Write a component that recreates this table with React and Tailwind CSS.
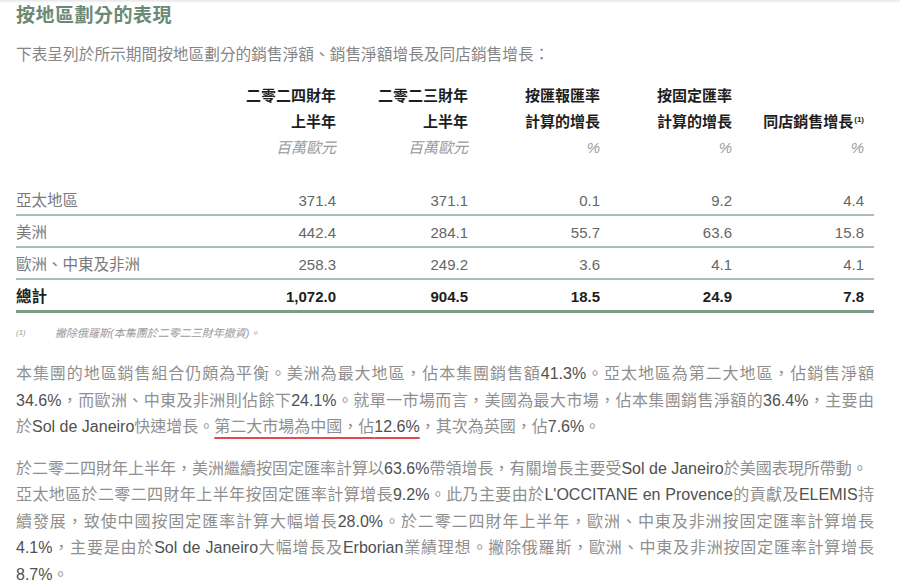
import React from 'react';

const cjk = { fontFamily: '"Liberation Sans", "Noto Sans CJK TC", sans-serif' };

const headers = [
  ['二零二四財年', '上半年', '百萬歐元'],
  ['二零二三財年', '上半年', '百萬歐元'],
  ['按匯報匯率', '計算的增長', '%'],
  ['按固定匯率', '計算的增長', '%'],
  ['', '同店銷售增長', '%'],
];

const rows = [
  { label: '亞太地區', values: ['371.4', '371.1', '0.1', '9.2', '4.4'] },
  { label: '美洲', values: ['442.4', '284.1', '55.7', '63.6', '15.8'] },
  { label: '歐洲、中東及非洲', values: ['258.3', '249.2', '3.6', '4.1', '4.1'] },
];

const total = { label: '總計', values: ['1,072.0', '904.5', '18.5', '24.9', '7.8'] };

// each paragraph is kept as its printed lines so the breaks match the page
const para1 = [
  ['本集團的地區銷售組合仍頗為平衡。美洲為最大地區，佔本集團銷售額41.3%。亞太地區為第二大地區，佔銷售淨額'],
  ['34.6%，而歐洲、中東及非洲則佔餘下24.1%。就單一市場而言，美國為最大市場，佔本集團銷售淨額的36.4%，主要由'],
  ['於Sol de Janeiro快速增長。', { u: '第二大市場為中國，佔12.6%' }, '，其次為英國，佔7.6%。'],
];

const para2 = [
  ['於二零二四財年上半年，美洲繼續按固定匯率計算以63.6%帶領增長，有關增長主要受Sol de Janeiro於美國表現所帶動。'],
  ["亞太地區於二零二四財年上半年按固定匯率計算增長9.2%。此乃主要由於L'OCCITANE en Provence的貢獻及ELEMIS持"],
  ['續發展，致使中國按固定匯率計算大幅增長28.0%。於二零二四財年上半年，歐洲、中東及非洲按固定匯率計算增長'],
  ['4.1%，主要是由於Sol de Janeiro大幅增長及Erborian業績理想。撇除俄羅斯，歐洲、中東及非洲按固定匯率計算增長'],
  ['8.7%。'],
];

function Runs({ text }) {
  const parts = text.split(/([A-Za-z0-9.,%' ]+)/);
  return parts.map((p, i) =>
    /^[A-Za-z0-9.,%' ]+$/.test(p) ? (
      <span key={i} className="text-[#505050]">{p}</span>
    ) : (
      <React.Fragment key={i}>{p}</React.Fragment>
    )
  );
}

function Paragraph({ lines, className }) {
  return (
    <div className={className}>
      {lines.map((line, i) => {
        const last = i === lines.length - 1;
        const loose = i === 0 && lines.length === 5;
        return (
          <div
            key={i}
            className={
              last || loose
                ? 'text-left whitespace-nowrap'
                : 'whitespace-nowrap text-justify [text-align-last:justify]'
            }
          >
            {line.map((part, j) =>
              typeof part === 'string' ? (
                <Runs key={j} text={part} />
              ) : (
                <span
                  key={j}
                  className="underline decoration-[#e5484f] decoration-2 underline-offset-[5px]"
                >
                  <Runs text={part.u} />
                </span>
              )
            )}
          </div>
        );
      })}
    </div>
  );
}

function Row({ row, bold }) {
  return (
    <div
      className={`flex pr-[10px] pt-[4px] ${
        bold ? 'border-b-[3px] border-[#7f9a86] h-[33px]' : 'border-b-2 border-[#a9bfae] h-[32px]'
      }`}
    >
      <div
        className={`flex-1 leading-[26px] text-[15.5px] ${
          bold ? 'font-bold text-[#1e1e1e]' : 'text-[#7a7a7a]'
        }`}
      >
        {row.label}
      </div>
      {row.values.map((v, i) => (
        <div
          key={i}
          className={`w-[132px] text-right leading-[26px] text-[15px] ${
            bold ? 'font-bold text-[#1e1e1e]' : 'text-[#666]'
          }`}
        >
          {v}
        </div>
      ))}
    </div>
  );
}

export default function App() {
  return (
    <div lang="zh-Hant-TW" className="w-[900px] h-[582px] overflow-hidden bg-white" style={cjk}>
      <div className="h-[3px] bg-gradient-to-b from-[#e6e6e6] to-white" />
      <div className="pl-[16px] pr-[26px]">
        <h1 className="text-[19px] leading-[24px] font-bold tracking-[0.5px] text-[#6b8a76] pt-[1px]">
          按地區劃分的表現
        </h1>
        <p className="mt-[15px] text-[15.7px] leading-[24px] text-[#858585]">
          下表呈列於所示期間按地區劃分的銷售淨額、銷售淨額增長及同店銷售增長：
        </p>

        {/* table head */}
        <div className="mt-[16px] flex pr-[10px]">
          <div className="flex-1" />
          {headers.map((h, i) => (
            <div key={i} className="w-[132px] text-right">
              <div className="h-[26px] leading-[26px] text-[15px] font-bold text-[#1e1e1e]">{h[0]}</div>
              <div className="h-[26px] leading-[26px] text-[15px] font-bold text-[#1e1e1e]">
                {h[1]}
                {i === 4 && <sup className="text-[8px] font-bold ml-[1px] -top-[5px]">(1)</sup>}
              </div>
              <div className="h-[26px] leading-[26px] text-[15px] italic text-[#9a9a9a]">{h[2]}</div>
            </div>
          ))}
        </div>

        {/* table body */}
        <div className="mt-[23px]">
          {rows.map((r) => (
            <Row key={r.label} row={r} />
          ))}
          <Row row={total} bold />
        </div>

        <div className="mt-[12px] flex items-center leading-[16px] italic text-[#9a9a9a]">
          <span className="w-[39px] text-[8px]">(1)</span>
          <span className="text-[11px]">撇除俄羅斯(本集團於二零二三財年撤資)。</span>
        </div>

        <Paragraph
          lines={para1}
          className="mt-[20px] text-[16px] leading-[26.5px] text-[#8f8f8f]"
        />
        <Paragraph
          lines={para2}
          className="mt-[15px] text-[16px] leading-[26.5px] text-[#8f8f8f]"
        />
      </div>
    </div>
  );
}
